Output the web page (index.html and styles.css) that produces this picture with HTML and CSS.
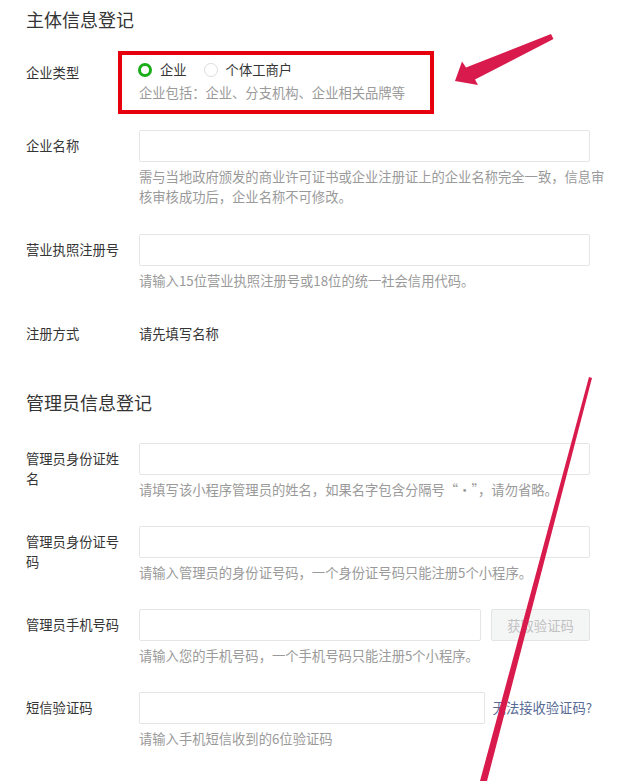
FILE: index.html
```html
<!DOCTYPE html>
<html lang="zh-CN">
<head>
    <meta charset="UTF-8">
    <meta name="viewport" content="width=device-width, initial-scale=1.0">
    <title>小程序注册 - 信息登记</title>
    <link rel="stylesheet" href="styles.css">
</head>
<body>

    <div class="page">
        <!-- 主体信息 -->
        <h2 class="section-title">主体信息登记</h2>

        <div class="form-row form-row-radio">
            <label class="form-label">企业类型</label>
            <div class="form-field">
                <div class="radio-group">
                    <span class="radio checked"></span>
                    <span class="radio-text">企业</span>
                    <span class="radio"></span>
                    <span class="radio-text">个体工商户</span>
                </div>
                <p class="form-tips">企业包括：企业、分支机构、企业相关品牌等</p>
            </div>
        </div>

        <div class="form-row">
            <label class="form-label">企业名称</label>
            <div class="form-field">
                <input class="form-input" type="text">
                <p class="form-tips">需与当地政府颁发的商业许可证书或企业注册证上的企业名称完全一致，信息审核审核成功后，企业名称不可修改。</p>
            </div>
        </div>

        <div class="form-row">
            <label class="form-label">营业执照注册号</label>
            <div class="form-field">
                <input class="form-input" type="text">
                <p class="form-tips">请输入15位营业执照注册号或18位的统一社会信用代码。</p>
            </div>
        </div>

        <div class="form-row form-row-text">
            <label class="form-label">注册方式</label>
            <div class="form-field">
                <span class="form-value">请先填写名称</span>
            </div>
        </div>

        <!-- 管理员信息 -->
        <h2 class="section-title section-title-second">管理员信息登记</h2>

        <div class="section-admin">
            <div class="form-row">
                <label class="form-label">管理员身份证姓名</label>
                <div class="form-field">
                    <input class="form-input" type="text">
                    <p class="form-tips">请填写该小程序管理员的姓名，如果名字包含分隔号“·”，请勿省略。</p>
                </div>
            </div>

            <div class="form-row">
                <label class="form-label">管理员身份证号码</label>
                <div class="form-field">
                    <input class="form-input" type="text">
                    <p class="form-tips">请输入管理员的身份证号码，一个身份证号码只能注册5个小程序。</p>
                </div>
            </div>

            <div class="form-row">
                <label class="form-label">管理员手机号码</label>
                <div class="form-field">
                    <div class="input-line">
                        <input class="form-input" type="text">
                        <button class="code-button" disabled>获取验证码</button>
                    </div>
                    <p class="form-tips">请输入您的手机号码，一个手机号码只能注册5个小程序。</p>
                </div>
            </div>

            <div class="form-row">
                <label class="form-label">短信验证码</label>
                <div class="form-field">
                    <div class="input-line input-line-link">
                        <input class="form-input" type="text">
                        <a class="help-link" href="#">无法接收验证码?</a>
                    </div>
                    <p class="form-tips">请输入手机短信收到的6位验证码</p>
                </div>
            </div>
        </div>
    </div>

    <!-- 标注 -->
    <div class="mark-box"></div>
    <svg class="mark-arrows" width="629" height="781" viewBox="0 0 629 781">
        <path d="M551 34 L553.5 39 L475 79.5 L478 85 L455 81 L462 61.5 L466 67.5 Z" fill="#d81b4c"/>
        <path d="M589 377 L592 378 L487 781 L480 781 Z" fill="#d81b4c"/>
    </svg>

</body>
</html>
```

FILE: styles.css
```css
* {
    margin: 0;
    padding: 0;
    box-sizing: border-box;
}

body {
    background-color: #fff;
    font-family: "Noto Sans CJK SC", "Noto Sans", sans-serif;
    color: #353535;
    font-size: 13.3px;
    line-height: 20px;
    position: relative;
    width: 629px;
    height: 781px;
    overflow: hidden;
}

.page {
    width: 590px;
    padding: 7px 0 0 26px;
}

.section-title {
    font-size: 18px;
    font-weight: normal;
    line-height: 24px;
    color: #353535;
    margin-bottom: 29px;
}

.section-title-second {
    margin-top: 46px;
}

/* 表单行 */
.form-row {
    display: flex;
    margin-bottom: 27px;
}

.section-admin .form-row {
    margin-bottom: 26px;
}

.form-row-text {
    margin-top: 33px;
}

.form-label {
    width: 100px;
    margin-right: 13px;
    padding-top: 6px;
    flex-shrink: 0;
}

.form-row-radio .form-label {
    padding-top: 3px;
}

.form-row-text .form-label {
    padding-top: 0;
}

.form-field {
    flex: 1;
    min-width: 0;
}

.form-input {
    display: block;
    width: 100%;
    height: 32px;
    border: 1px solid #e5e5e5;
    border-radius: 2px;
    background-color: #fff;
    outline: none;
}

.form-tips {
    color: #9a9a9a;
    margin-top: 5px;
    width: calc(100% + 18px);
}

.form-row-radio .form-tips {
    margin-top: 3px;
}

.form-value {
    color: #353535;
}

/* 单选 */
.radio-group {
    display: flex;
    align-items: center;
    height: 20px;
    margin-left: -1px;
}

.radio {
    width: 14px;
    height: 14px;
    border-radius: 50%;
    border: 1px solid #dcdcdc;
    margin-right: 8px;
}

.radio.checked {
    border: 3.5px solid #1aad19;
}

.radio-text {
    margin-right: 17px;
}

/* 输入+按钮 */
.input-line {
    display: flex;
    align-items: center;
}

.input-line .form-input {
    flex: 1;
}

.input-line-link {
    margin-right: -2px;
}

.code-button {
    width: 99px;
    height: 32px;
    margin-left: 10px;
    background-color: #f4f5f5;
    border: 1px solid #e4e4e4;
    border-radius: 2px;
    color: #c2c2c2;
    font-family: inherit;
    font-size: 13.3px;
}

.help-link {
    margin-left: 8px;
    color: #576b95;
    text-decoration: none;
    white-space: nowrap;
}

/* 标注 */
.mark-box {
    position: absolute;
    left: 118px;
    top: 51px;
    width: 316px;
    height: 63px;
    border: 4px solid #e6000e;
}

.mark-arrows {
    position: absolute;
    left: 0;
    top: 0;
    pointer-events: none;
}
```
